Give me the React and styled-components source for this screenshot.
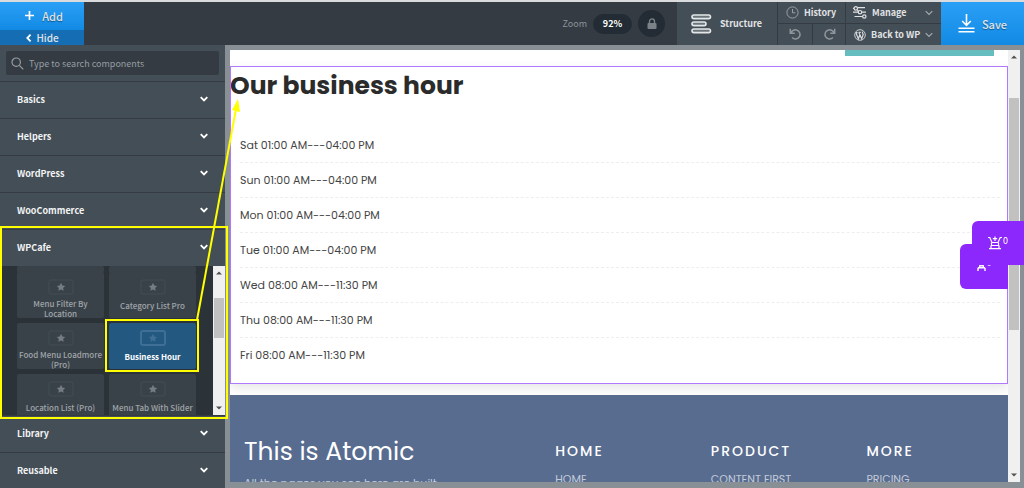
import React from 'react'
import styled, { createGlobalStyle, css } from 'styled-components'

const GlobalStyle = createGlobalStyle`
  * {
    box-sizing: border-box;
  }
  body {
    margin: 0;
    font-family: "Noto Sans CJK SC", "Noto Sans", sans-serif;
    font-size: 9px;
    color: #e0e3e5;
  }
  button, input {
    font: inherit;
    color: inherit;
    border: 0;
    padding: 0;
    margin: 0;
    background: none;
  }
  a {
    color: inherit;
    text-decoration: none;
  }
  h1, h2, h3, p, ul {
    margin: 0;
    padding: 0;
    list-style: none;
  }
  svg {
    display: block;
    flex: none;
  }
`

const Shell = styled.div`
  position: relative;
  display: flex;
  flex-direction: column;
  height: 100vh;
  overflow: hidden;
  background: #444e56;
`

/* top bar */

const TopBar = styled.header`
  display: flex;
  flex: none;
  height: 45px;
  border-top: 2px solid #d9dbdc;
  background: #343b42;
`

const AddGroup = styled.div`
  display: flex;
  flex-direction: column;
  width: 84px;
`

const AddButton = styled.button`
  display: flex;
  flex: 1;
  align-items: center;
  justify-content: center;
  gap: 8px;
  padding: 0 0 1px 4px;
  font-size: 11px;
  line-height: 16px;
  font-weight: 500;
  background: linear-gradient(#2a9ff6, #128ae4);
  text-shadow: 0 1px 1px rgba(0, 0, 0, .4);
`

const HideButton = styled.button`
  display: flex;
  align-items: center;
  justify-content: center;
  gap: 3px;
  height: 15px;
  font-size: 10px;
  line-height: 15px;
  font-weight: 500;
  background: #156eb3;
`

const ZoomGroup = styled.div`
  display: flex;
  align-items: center;
  gap: 6px;
  margin-left: auto;
  padding-right: 12px;
  color: #8d949a;
`

const ZoomValue = styled.button`
  width: 39px;
  height: 20px;
  border-radius: 10px;
  line-height: 20px;
  font-weight: 700;
  color: #fff;
  background: #232c34;
`

const LockButton = styled.button`
  display: flex;
  align-items: center;
  justify-content: center;
  width: 27px;
  height: 27px;
  border-radius: 50%;
  background: #232c34;
`

const StructureButton = styled.button`
  display: flex;
  align-items: center;
  gap: 8px;
  width: 101px;
  padding-left: 14px;
  font-weight: 700;
  background: #444e56;
  border-right: 1px solid #343b42;
`

const ToolGrid = styled.div`
  display: grid;
  grid-template-columns: 34px 32px 95px;
  grid-template-rows: 21px 21px;
  gap: 1px;
  background: #343b42;
`

const Tool = styled.button`
  display: flex;
  align-items: center;
  justify-content: ${p => (p.$center ? 'center' : 'flex-start')};
  gap: 5px;
  padding: ${p => (p.$center ? '0' : '0 8px 0 7px')};
  grid-column: ${p => (p.$wide ? 'span 2' : 'auto')};
  font-weight: 700;
  white-space: nowrap;
  background: #444e56;
  svg:nth-of-type(2) {
    margin-left: auto;
  }
`

const SaveButton = styled.button`
  display: flex;
  align-items: center;
  justify-content: center;
  gap: 7px;
  width: 83px;
  font-size: 11px;
  font-weight: 500;
  background: linear-gradient(#2a9ff6, #128ae4);
  text-shadow: 0 1px 1px rgba(0, 0, 0, .4);
`

/* sidebar */

const Body = styled.div`
  display: flex;
  flex: 1;
  min-height: 0;
`

const Sidebar = styled.aside`
  width: 225px;
  flex: none;
  overflow: hidden;
`

const SearchBox = styled.label`
  display: flex;
  align-items: center;
  gap: 5px;
  height: 24px;
  margin: 6px;
  padding: 0 5px;
  border-radius: 2px;
  background: #343b42;
`

const SearchInput = styled.input`
  flex: 1;
  min-width: 0;
  outline: 0;
  &::placeholder {
    color: #969da2;
    opacity: 1;
  }
`

const GroupButton = styled.button`
  display: flex;
  align-items: center;
  justify-content: space-between;
  width: 100%;
  height: 37px;
  padding: 0 17px 2px;
  font-weight: 700;
  color: #f2f4f5;
  border-top: 1px solid #343b42;
`

const Panel = styled.div`
  display: flex;
  height: 149px;
  overflow: hidden;
  background: #2b3339;
`

const Tiles = styled.div`
  display: grid;
  flex: 1;
  grid-template-columns: 1fr 1fr;
  grid-template-rows: 1px;
  grid-auto-rows: 46px;
  gap: 5px;
  padding: 0 17px;
`

const Tile = styled.button`
  display: flex;
  flex-direction: column;
  align-items: center;
  gap: 4px;
  min-width: 0;
  padding-top: 7px;
  overflow: hidden;
  border-radius: 2px;
  font-size: 8px;
  line-height: 10px;
  font-weight: 500;
  color: #a0a5a9;
  background: #3a4249;
  ${p => p.$active && css`
    font-weight: 700;
    color: #fff;
    background: #235880;
  `}
`

const TileLabel = styled.span`
  display: flex;
  align-items: center;
  justify-content: center;
  min-height: 14px;
  white-space: pre;
`

/* scroll bars */

const Track = styled.div`
  display: flex;
  flex-direction: column;
  align-items: center;
  width: 12px;
  flex: none;
  background: #f0f0f0;
  svg {
    margin: 5px 0;
  }
`

const Thumb = styled.div`
  width: 10px;
  flex: ${p => p.$size} 0 0;
  background: #c1c1c1;
`

const Space = styled.div`
  flex: ${p => p.$size} 0 0;
`

/* preview */

const Frame = styled.main`
  display: flex;
  flex: 1;
  min-width: 0;
  padding: 5px 4px 6px 5px;
  background: #888f95;
`

const Page = styled.div`
  flex: 1;
  min-width: 0;
  overflow: hidden;
  font-family: Poppins, Inter, sans-serif;
  background: #fff;
`

const Strip = styled.div`
  width: 149px;
  height: 6px;
  margin: 0 14px 10px auto;
  background: #65bdc0;
`

const HoursSection = styled.section`
  height: 318px;
  padding-top: 1px;
  outline: 1px solid #b078ff;
  outline-offset: -1px;
  box-shadow: 0 4px 10px rgba(0, 0, 0, .1);
`

const HoursTitle = styled.h1`
  font-size: 25px;
  line-height: 38px;
  font-weight: 700;
  color: #2b2b2b;
`

const Hours = styled.ul`
  padding: 23px 8px 0 10px;
`

const HoursRow = styled.li`
  height: 35px;
  font-size: 11px;
  line-height: 34px;
  color: #444;
  border-bottom: 1px dashed #eee;
  &:last-child {
    border-bottom: 0;
  }
`

const Footer = styled.footer`
  display: grid;
  grid-template-columns: 2fr 1fr 1fr 1fr;
  height: 120px;
  margin-top: 11px;
  padding-top: 41px;
  color: #fff;
  background: #586c90;
`

const FooterColumn = styled.div`
  padding-left: 14px;
`

const FooterBrand = styled.h2`
  font-size: 25px;
  line-height: 32px;
  font-weight: 400;
`

const FooterText = styled.p`
  margin-top: 7px;
  font-size: 11px;
  line-height: 16px;
  color: #c3cbd8;
`

const FooterHeading = styled.h3`
  font-size: 14px;
  line-height: 30px;
  font-weight: 500;
  letter-spacing: 2px;
`

const FooterLink = styled.a`
  display: block;
  margin-top: 6px;
  font-size: 11px;
  line-height: 14px;
  color: #c3cbd8;
`

/* floating cart and markers */

const Cart = styled.button`
  position: absolute;
  top: ${p => p.$top}px;
  right: ${p => p.$right}px;
  display: flex;
  align-items: center;
  justify-content: center;
  gap: 1px;
  width: ${p => p.$width}px;
  height: ${p => p.$height}px;
  border-radius: 6px 0 0 6px;
  color: #fff;
  background: #8d28fc;
`

const CartCount = styled.span`
  height: 14px;
  line-height: 9px;
`

const Markers = styled.svg`
  position: absolute;
  top: 0;
  left: 0;
  pointer-events: none;
`

const Chevron = ({ dir = 'down', size = 8, color = '#fff', width = 1.8 }) => (
  <svg width={size} height={size} viewBox="0 0 8 8" fill="none" stroke={color} strokeWidth={width}>
    <path d={dir === 'down' ? 'M.7 2.2 4 5.5l3.3-3.3' : 'M5.6.7 2.3 4l3.3 3.3'} />
  </svg>
)

const Triangle = ({ up }) => (
  <svg width="6" height="4" viewBox="0 0 6 4" fill="#505050">
    <path d={up ? 'M0 3.5 3 .5l3 3z' : 'M0 .5h6l-3 3z'} />
  </svg>
)

const ScrollBar = ({ before, thumb, after }) => (
  <Track>
    <Triangle up />
    <Space $size={before} />
    <Thumb $size={thumb} />
    <Space $size={after} />
    <Triangle />
  </Track>
)

const PlusIcon = () => (
  <svg width="9" height="9" viewBox="0 0 9 9" stroke="#fff" strokeWidth="1.7">
    <path d="M4.5 0v9M0 4.5h9" />
  </svg>
)

const LockIcon = () => (
  <svg width="10" height="12" viewBox="0 0 10 12">
    <rect x=".5" y="5" width="9" height="6" rx="1" fill="#7b8288" />
    <path d="M2.5 5V3.4a2.5 2.5 0 0 1 5 0V5" fill="none" stroke="#7b8288" strokeWidth="1.4" />
  </svg>
)

const StructureIcon = () => (
  <svg width="21" height="20" viewBox="0 0 21 20" fill="#6b747b" stroke="#e4e7e8" strokeWidth="1.6">
    <rect x="1" y="1" width="18.5" height="3.6" rx="1.8" />
    <rect x="1" y="8" width="14" height="3.6" rx="1.8" />
    <rect x="1" y="15" width="18.5" height="3.6" rx="1.8" />
  </svg>
)

const ClockIcon = () => (
  <svg width="14" height="13" viewBox="-1 0 14 13" fill="none" stroke="#9aa0a5">
    <circle cx="6.5" cy="6.5" r="5.6" />
    <path d="M6.5 3v3.8h2.8" />
  </svg>
)

const ManageIcon = () => (
  <svg width="14" height="13" viewBox="0 0 14 13" fill="none" stroke="#dfe2e4" strokeWidth="1.2">
    <path d="M4.6 1.6H12M0 2.4h1M4.4 4l.9 1M0 6.2h5.2M8.8 6.2H13M1.500 10.500h8" />
    <circle cx="2.8" cy="2.4" r="1.7" />
    <circle cx="7" cy="6.2" r="1.7" />
    <circle cx="11.3" cy="10.5" r="1.7" />
  </svg>
)

const WordPressIcon = () => (
  <svg width="13" height="12" viewBox="-1 0 13 12" fill="none" stroke="#d5d9dc">
    <circle cx="6" cy="6" r="5.3" strokeWidth=".9" />
    <path d="m2 3.9 2.4 5.9L6 5.5M4.8 3.2l2.9 6.6L9.2 5.5 8.2 2.6M1.8 3.7h1.8M4.6 3.3h2.2" strokeWidth="1.2" />
  </svg>
)

const TurnIcon = ({ redo }) => (
  <svg width="13" height="13" viewBox="0 0 13 13" fill="none" stroke="#8f959a" strokeWidth="1.5">
    <g transform={redo ? 'translate(13 0) scale(-1 1)' : undefined}>
      <path d="M1.3.8v4.5h4.5M1.6 5C3 2.6 5.2 1.7 7.3 1.9a4.6 4.6 0 1 1-4.2 7.7" />
    </g>
  </svg>
)

const SaveIcon = () => (
  <svg width="17" height="19" viewBox="0 0 17 19" fill="none" stroke="#fff" strokeWidth="1.6">
    <path d="M8.5 0v11M4.2 7l4.3 4.3L12.8 7M.5 14.3h16M.5 17.7h16" />
  </svg>
)

const SearchIcon = () => (
  <svg width="13" height="13" viewBox="0 0 13 13" fill="none" stroke="#969da2" strokeWidth="1.2">
    <circle cx="5.2" cy="5.2" r="4.2" />
    <path d="m8.3 8.3 4 4" />
  </svg>
)

const StarIcon = ({ active }) => (
  <svg width="26" height="16" viewBox="0 0 26 16">
    <rect
      x="1" y="1" width="24" height="14" rx="2"
      fill="none" stroke={active ? '#3f6f95' : '#454d54'} strokeWidth={active ? 2 : 1}
    />
    <path
      d="m13 3.8 1.3 2.7 2.9.4-2.1 2 .6 2.9-2.7-1.4-2.7 1.4.6-2.9-2.1-2 2.9-.4z"
      fill={active ? '#3f6f95' : '#757c82'}
    />
  </svg>
)

const CartIcon = () => (
  <svg width="14" height="14" viewBox="0 0 14 14" fill="none" stroke="#fff" strokeWidth="1.2">
    <path d="M7 .5v4.5M4.8 2.7h4.4M0 1.500h1.800L4 6.500h6l2.200-5H14" />
    <path d="M3.500 6.500v3h7v-3M3 9.500v3M11 9.500v3M1 12.600h12" />
  </svg>
)

const CartBaseIcon = () => (
  <svg width="9" height="8" viewBox="0 0 9 8" fill="none" stroke="#fff" strokeWidth="1.4">
    <path d="M.5.7h2l.5 2h3l.5-2h2M1 4.700h7M2.700 2.700v2M6.300 2.700v2M1 4.700v3.300M8 4.700v3.300" />
  </svg>
)

const groups = ['Basics', 'Helpers', 'WordPress', 'WooCommerce', 'WPCafe']

const components = [
  'Menu Filter By\nLocation',
  'Category List Pro',
  'Food Menu Loadmore\n(Pro)',
  'Business Hour',
  'Location List (Pro)',
  'Menu Tab With Slider'
]

const hours = [
  'Sat 01:00 AM---04:00 PM',
  'Sun 01:00 AM---04:00 PM',
  'Mon 01:00 AM---04:00 PM',
  'Tue 01:00 AM---04:00 PM',
  'Wed 08:00 AM---11:30 PM',
  'Thu 08:00 AM---11:30 PM',
  'Fri 08:00 AM---11:30 PM'
]

const footerLinks = [['HOME', 'HOME'], ['PRODUCT', 'CONTENT FIRST'], ['MORE', 'PRICING']]

const Group = ({ name }) => (
  <GroupButton>
    {name}
    <Chevron />
  </GroupButton>
)

export default function App() {
  return (
    <Shell>
      <GlobalStyle />
      <TopBar>
        <AddGroup>
          <AddButton><PlusIcon />Add</AddButton>
          <HideButton><Chevron dir="left" />Hide</HideButton>
        </AddGroup>
        <ZoomGroup>
          Zoom
          <ZoomValue>92%</ZoomValue>
          <LockButton aria-label="Lock"><LockIcon /></LockButton>
        </ZoomGroup>
        <StructureButton><StructureIcon />Structure</StructureButton>
        <ToolGrid>
          <Tool $wide><ClockIcon />History</Tool>
          <Tool><ManageIcon />Manage<Chevron color="#a5abb0" width={1.2} /></Tool>
          <Tool $center aria-label="Undo"><TurnIcon /></Tool>
          <Tool $center aria-label="Redo"><TurnIcon redo /></Tool>
          <Tool><WordPressIcon />Back to WP<Chevron color="#a5abb0" width={1.2} /></Tool>
        </ToolGrid>
        <SaveButton><SaveIcon />Save</SaveButton>
      </TopBar>

      <Body>
        <Sidebar>
          <SearchBox>
            <SearchIcon />
            <SearchInput aria-label="Search components" placeholder="Type to search components" />
          </SearchBox>
          {groups.map(name => <Group key={name} name={name} />)}
          <Panel>
            <Tiles>
              <Tile as="div" />
              <Tile as="div" />
              {components.map(name => (
                <Tile key={name} $active={name === 'Business Hour'}>
                  <StarIcon active={name === 'Business Hour'} />
                  <TileLabel>{name}</TileLabel>
                </Tile>
              ))}
            </Tiles>
            <ScrollBar before={18} thumb={40} after={63} />
          </Panel>
          <Group name="Library" />
          <Group name="Reusable" />
        </Sidebar>

        <Frame>
          <Page>
            <Strip />
            <HoursSection>
              <HoursTitle>Our business hour</HoursTitle>
              <Hours>
                {hours.map(row => <HoursRow key={row}>{row}</HoursRow>)}
              </Hours>
            </HoursSection>
            <Footer>
              <FooterColumn>
                <FooterBrand>This is Atomic</FooterBrand>
                <FooterText>All the pages you see here are built</FooterText>
              </FooterColumn>
              {footerLinks.map(([title, link]) => (
                <FooterColumn key={title}>
                  <FooterHeading>{title}</FooterHeading>
                  <FooterLink href="#">{link}</FooterLink>
                </FooterColumn>
              ))}
            </Footer>
          </Page>
          <ScrollBar before={34} thumb={232} after={138} />
        </Frame>
      </Body>

      <Cart $top={244} $right={16} $width={48} $height={45} aria-label="Mini cart">
        <CartBaseIcon />
        <CartCount>-</CartCount>
      </Cart>
      <Cart $top={221} $right={0} $width={52} $height={44} aria-label="Cart">
        <CartIcon />
        <CartCount>0</CartCount>
      </Cart>

      <Markers width="260" height="430" fill="none" stroke="#ff0" strokeWidth="2">
        <rect x="1" y="227" width="226" height="191" />
        <rect x="106" y="320" width="92" height="51" />
        <path d="m197 320 39-211" />
        <path d="m238 99-6 11 8 2z" fill="#ff0" stroke="none" />
      </Markers>
    </Shell>
  )
}
